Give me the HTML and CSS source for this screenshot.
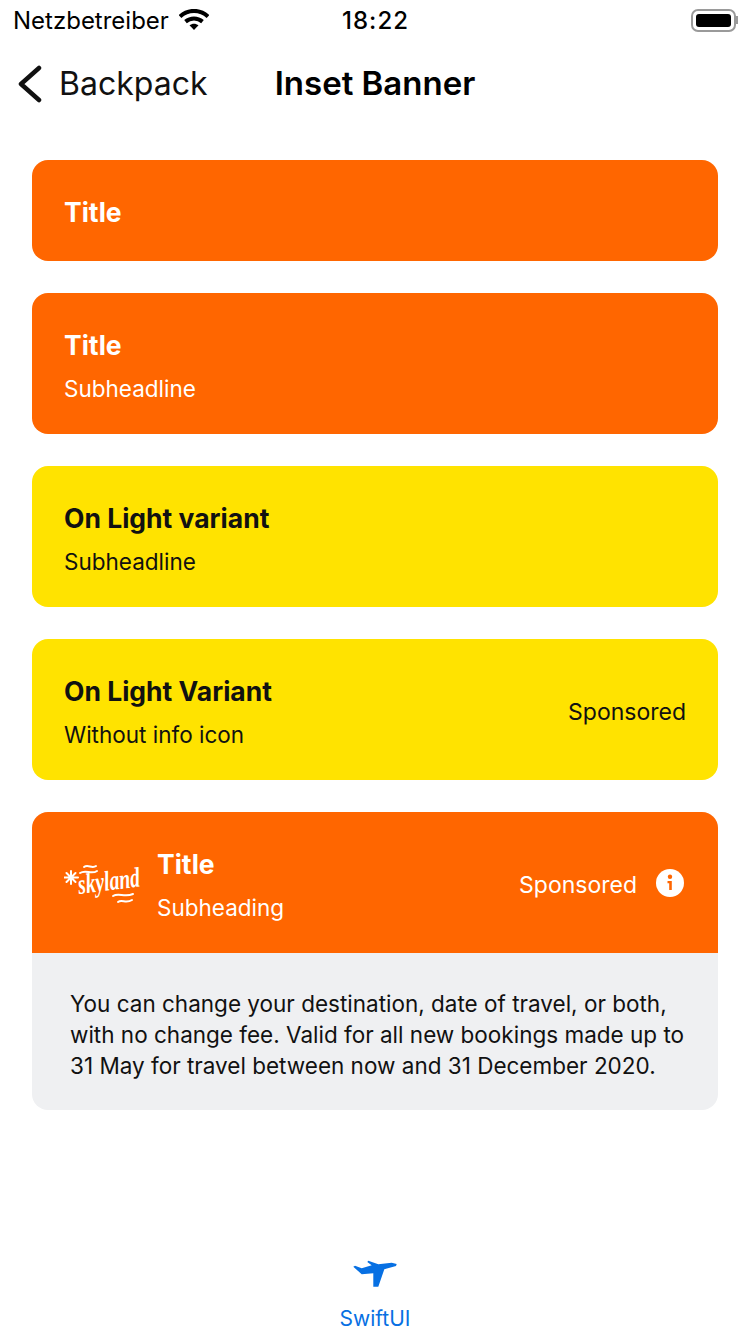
FILE: index.html
```html
<!DOCTYPE html>
<html lang="en">
<head>
  <meta charset="UTF-8" />
  <meta name="viewport" content="width=device-width, initial-scale=1.0" />
  <title>Inset Banner</title>
  <link rel="stylesheet" href="styles.css">
</head>
<body>
  <div class="page">
    <div class="status-bar">
      <div class="status-left">
        <span>Netzbetreiber</span>
        <svg class="wifi" viewBox="0 0 30 22" width="30" height="22">
          <path d="M1 7.5C9 0 21 0 29 7.5" fill="none" stroke="#000" stroke-width="4" />
          <path d="M6.5 12.6C11.5 8.4 18.5 8.4 23.5 12.6" fill="none" stroke="#000" stroke-width="4" />
          <path d="M10.5 16.3C13.2 14.2 16.8 14.2 19.5 16.3L15 21Z" fill="#000" />
        </svg>
      </div>
      <div class="status-time">18:22</div>
      <div class="status-right">
        <div class="battery"><div class="battery-fill"></div></div>
        <div class="battery-cap"></div>
      </div>
    </div>

    <div class="nav-bar">
      <div class="nav-back">
        <svg class="chevron" viewBox="0 0 26 38" width="26" height="38">
          <path d="M23 3L5 19L23 35" fill="none" stroke="#111" stroke-width="4.5" stroke-linecap="round" stroke-linejoin="round" />
        </svg>
        <span>Backpack</span>
      </div>
      <div class="nav-title">Inset Banner</div>
    </div>

    <div class="content">
      <div class="banner orange">
        <div class="banner-text">
          <div class="title">Title</div>
        </div>
      </div>

      <div class="banner orange">
        <div class="banner-text">
          <div class="title">Title</div>
          <div class="sub">Subheadline</div>
        </div>
      </div>

      <div class="banner yellow">
        <div class="banner-text">
          <div class="title">On Light variant</div>
          <div class="sub">Subheadline</div>
        </div>
      </div>

      <div class="banner yellow">
        <div class="banner-text">
          <div class="title">On Light Variant</div>
          <div class="sub">Without info icon</div>
        </div>
        <div class="sponsored">Sponsored</div>
      </div>

      <div class="card">
        <div class="banner orange flat">
          <div class="logo">
            <svg class="logo-art" viewBox="0 0 78 44" width="78" height="44">
              <g stroke="#fff" stroke-width="2" stroke-linecap="round" fill="none">
                <path d="M0.500 14.500L14 14.500M7 8L7 21M2.500 10L11.500 19M11.500 10L2.500 19" />
                <path d="M20 4C24 1 28 6 32 3" />
                <path d="M16 10C22 6 27 12 33 8" />
                <path d="M49 33C55 29 60 35 69 31" />
                <path d="M54 39C58 36 62 41 68 37" />
              </g>
            </svg>
            <span class="logo-name">skyland</span>
          </div>
          <div class="banner-text">
            <div class="title">Title</div>
            <div class="sub">Subheading</div>
          </div>
          <div class="sponsored">Sponsored</div>
          <svg class="info" viewBox="0 0 28 28" width="28" height="28">
            <circle cx="14" cy="14" r="14" fill="#fff" />
            <circle cx="14" cy="7.800" r="2.200" fill="#ff6600" />
            <path d="M11.500 12H15.800V21H13.200V14.200H11.500Z" fill="#ff6600" />
          </svg>
        </div>
        <div class="card-body">
          You can change your destination, date of travel, or both, with no change fee. Valid for all new bookings made up to 31 May for travel between now and 31 December 2020.
        </div>
      </div>
    </div>

    <div class="tab-bar">
      <svg class="plane" viewBox="0 0 46 30" width="46" height="30">
        <path d="M1.300 8.700L9.700 16.300L21.300 15.300L21.300 28.700L26.300 28.700L32.300 11.300L44 8L44.700 6L39.700 4.700L26.300 6.300L16.300 2.700L15.300 4L19.700 7.300L9.700 10.300L3 7.700Z" fill="#0770e3" />
      </svg>
      <div class="tab-label">SwiftUI</div>
    </div>
  </div>
</body>
</html>
```

FILE: styles.css
```css
/* Inset banner screen */
body {
  font-family: Inter, "Noto Sans", sans-serif;
  margin: 0;
  padding: 0;
  background-color: white;
  color: #111;
}

.page {
  display: flex;
  flex-direction: column;
  height: 1334px;
  overflow: hidden;
}

.status-bar {
  display: flex;
  justify-content: space-between;
  align-items: center;
  height: 40px;
  padding: 0 12px 0 13px;
  font-size: 24px;
  color: black;
}

.status-left {
  display: flex;
  align-items: center;
  gap: 10px;
  width: 271px;
}

.status-time {
  font-weight: 500;
  letter-spacing: 1px;
}

.status-right {
  display: flex;
  align-items: center;
  justify-content: flex-end;
  width: 271px;
}

.battery {
  width: 45px;
  height: 23px;
  padding: 3px;
  box-sizing: border-box;
  border: 2px solid #9a9a9a;
  border-radius: 7px;
}

.battery-fill {
  height: 100%;
  background-color: black;
  border-radius: 3px;
}

.battery-cap {
  width: 2px;
  height: 8px;
  background-color: #9a9a9a;
}

.nav-bar {
  position: relative;
  display: flex;
  justify-content: center;
  align-items: center;
  box-sizing: border-box;
  height: 88px;
  padding-bottom: 2px;
  font-size: 32px;
  color: #111;
}

.nav-back {
  position: absolute;
  left: 16px;
  top: 24px;
  display: flex;
  align-items: center;
  gap: 17px;
}

.nav-title {
  font-size: 33px;
  font-weight: 600;
  color: #000;
}

.content {
  display: flex;
  flex-direction: column;
  gap: 32px;
  padding: 32px 32px 0;
}

.banner {
  display: flex;
  align-items: center;
  padding: 34px 32px 30px;
  border-radius: 16px;
}

.banner.orange {
  background-color: #ff6600;
  color: white;
}

.banner.yellow {
  background-color: #ffe300;
  color: #111;
}

.banner.flat {
  border-radius: 0;
}

.banner-text {
  flex: 1;
}

.title {
  font-size: 26.5px;
  font-weight: 700;
  line-height: 37px;
}

.sub {
  font-size: 22.5px;
  line-height: 33px;
  margin-top: 8px;
  margin-bottom: -1px;
}

.sponsored {
  font-size: 23px;
  line-height: 32px;
}

.info {
  margin-left: 19px;
  margin-right: 2px;
  position: relative;
  top: -2px;
}

.card {
  border-radius: 16px;
  overflow: hidden;
  background-color: #eff0f2;
}

.card-body {
  padding: 35px 20px 29px 38px;
  font-size: 22.5px;
  line-height: 31px;
  color: #111;
}

.logo {
  position: relative;
  width: 78px;
  height: 44px;
  margin-right: 15px;
}

.logo-art {
  display: block;
}

.logo-name {
  position: absolute;
  left: 14px;
  top: 4px;
  font-family: "Liberation Serif", serif;
  font-style: italic;
  font-weight: 700;
  font-size: 28px;
  line-height: 36px;
  transform: rotate(-7deg) scaleX(0.7);
  transform-origin: left center;
}

.tab-bar {
  margin-top: auto;
  display: flex;
  flex-direction: column;
  align-items: center;
  padding-bottom: 3px;
}

.tab-label {
  font-size: 21px;
  line-height: 24px;
  margin-top: 19px;
  color: #0770e3;
}
```
